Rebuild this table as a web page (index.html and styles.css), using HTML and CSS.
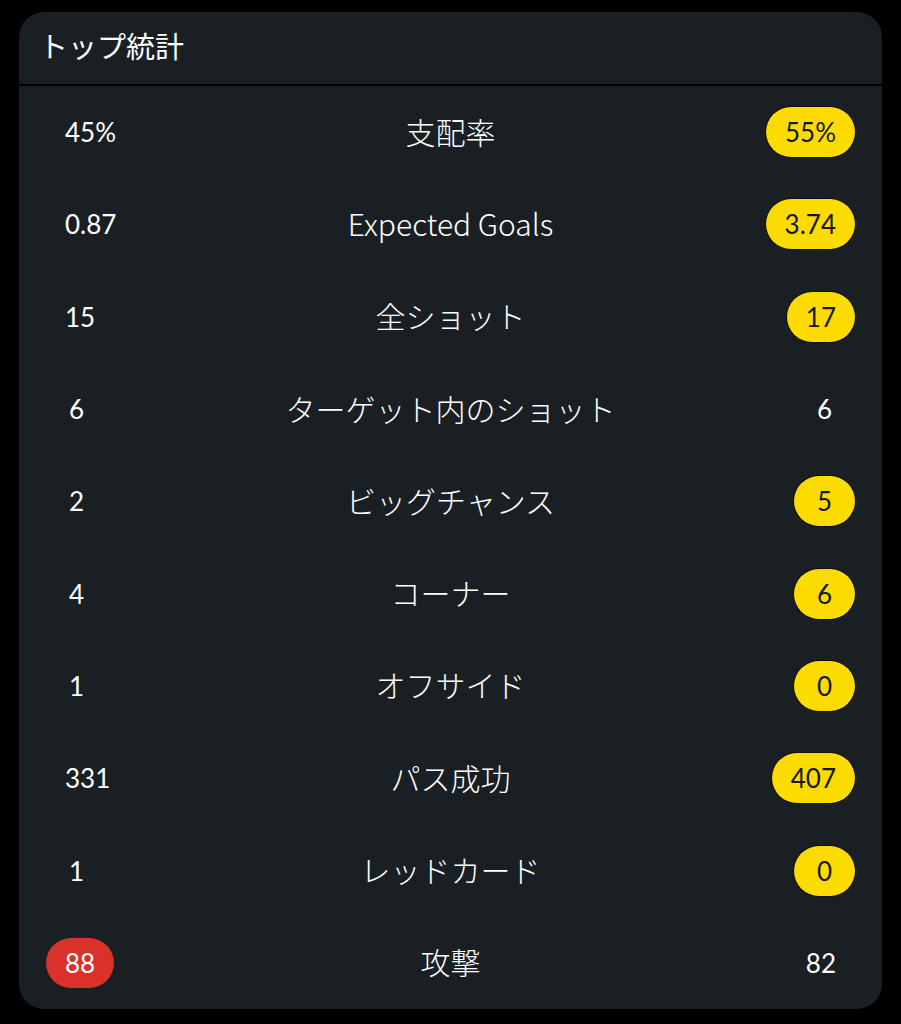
FILE: index.html
```html
<!DOCTYPE html>
<html lang="ja">
  <head>
    <meta charset="utf-8" />
    <link rel="stylesheet" href="styles.css">
  </head>
  <body>
    <div class="card">
      <div class="cardHead">トップ統計</div>
      <div class="statList">
        <div class="statRow">
          <span class="val">45%</span>
          <span class="label">支配率</span>
          <span class="val win">55%</span>
        </div>
        <div class="statRow">
          <span class="val">0.87</span>
          <span class="label">Expected Goals</span>
          <span class="val win">3.74</span>
        </div>
        <div class="statRow">
          <span class="val">15</span>
          <span class="label">全ショット</span>
          <span class="val win">17</span>
        </div>
        <div class="statRow">
          <span class="val">6</span>
          <span class="label">ターゲット内のショット</span>
          <span class="val">6</span>
        </div>
        <div class="statRow">
          <span class="val">2</span>
          <span class="label">ビッグチャンス</span>
          <span class="val win">5</span>
        </div>
        <div class="statRow">
          <span class="val">4</span>
          <span class="label">コーナー</span>
          <span class="val win">6</span>
        </div>
        <div class="statRow">
          <span class="val">1</span>
          <span class="label">オフサイド</span>
          <span class="val win">0</span>
        </div>
        <div class="statRow">
          <span class="val">331</span>
          <span class="label">パス成功</span>
          <span class="val win">407</span>
        </div>
        <div class="statRow">
          <span class="val">1</span>
          <span class="label">レッドカード</span>
          <span class="val win">0</span>
        </div>
        <div class="statRow">
          <span class="val lead">88</span>
          <span class="label">攻撃</span>
          <span class="val">82</span>
        </div>
      </div>
    </div>
  </body>
</html>
```

FILE: styles.css
```css
html,
body {
  margin: 0;
  background: #000;
}

body {
  padding: 12px 19px 15px;
  font-family: "Noto Sans CJK JP", "Noto Sans", sans-serif;
  color: #fff;
}

.card {
  height: 997px;
  background: #1a1f24;
  border-radius: 25px;
  display: flex;
  flex-direction: column;
  overflow: hidden;
}

.cardHead {
  height: 74px;
  flex: none;
  display: flex;
  align-items: center;
  padding: 0 20px 6px;
  box-sizing: border-box;
  font-size: 29px;
  font-weight: 400;
  border-bottom: 2px solid #000;
}

.statList {
  flex: 1;
  display: flex;
  flex-direction: column;
}

.statRow {
  flex: 1;
  display: grid;
  grid-template-columns: 1fr auto 1fr;
  align-items: center;
  padding: 0 27px;
}

.label {
  font-size: 30px;
  font-weight: 300;
  text-align: center;
  white-space: nowrap;
  margin-top: -3px;
}

.val {
  justify-self: start;
  box-sizing: border-box;
  min-width: 61px;
  height: 50px;
  line-height: 50px;
  padding: 0 19px;
  border-radius: 25px;
  text-align: center;
  font-family: Lato, "Noto Sans", sans-serif;
  font-size: 26px;
  font-weight: 400;
}

.val:last-child {
  justify-self: end;
}

.win {
  background: #fcdc00;
  color: #15191c;
  box-shadow: 0 0 0 1px #111;
}

.lead {
  background: #d8322a;
  color: #fff;
}
```
